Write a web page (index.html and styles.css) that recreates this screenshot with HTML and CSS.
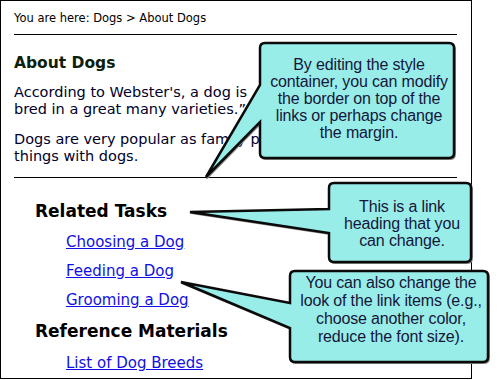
FILE: index.html
```html
<!DOCTYPE html>
<html lang="en">
<head>
<meta charset="utf-8">
<title>About Dogs</title>
<link rel="stylesheet" href="styles.css">
</head>
<body>
<div class="frame">
  <div class="crumbs">You are here: Dogs &gt; About Dogs</div>
  <hr class="rule rule-top">
  <h1 class="title">About Dogs</h1>
  <p class="para para-1">According to Webster's, a dog is<br>bred in a great many varieties.”</p>
  <p class="para para-2">Dogs are very popular as family pets.<br>things with dogs.</p>
  <hr class="rule rule-bottom">
  <h2 class="rel-head rel-head-first">Related Tasks</h2>
  <ul class="rel-list">
    <li><a href="#">Choosing a Dog</a></li>
    <li><a href="#">Feeding a Dog</a></li>
    <li><a href="#">Grooming a Dog</a></li>
  </ul>
  <h2 class="rel-head rel-head-second">Reference Materials</h2>
  <ul class="rel-list rel-list-last">
    <li><a href="#">List of Dog Breeds</a></li>
  </ul>

  <svg class="callouts" width="501" height="380" viewBox="0 0 501 380" aria-hidden="true">
    <g class="shadow" transform="translate(1 1)">
      <path d="M265 43 H449 Q454 43 454 48 V153 Q454 158 449 158 H265 Q260 158 260 153 V122 L206 177 L260 85 V48 Q260 43 265 43 Z"/>
      <path d="M334 183 H466 Q471 183 471 188 V257 Q471 262 466 262 H334 Q329 262 329 257 V233 L190 212 L329 209 V188 Q329 183 334 183 Z"/>
      <path d="M295 271 H483 Q488 271 488 276 V357 Q488 362 483 362 H295 Q290 362 290 357 V328 L181 282 L290 303 V276 Q290 271 295 271 Z"/>
    </g>
    <g class="bubble">
      <path d="M265 43 H449 Q454 43 454 48 V153 Q454 158 449 158 H265 Q260 158 260 153 V122 L206 177 L260 85 V48 Q260 43 265 43 Z"/>
      <path d="M334 183 H466 Q471 183 471 188 V257 Q471 262 466 262 H334 Q329 262 329 257 V233 L190 212 L329 209 V188 Q329 183 334 183 Z"/>
      <path d="M295 271 H483 Q488 271 488 276 V357 Q488 362 483 362 H295 Q290 362 290 357 V328 L181 282 L290 303 V276 Q290 271 295 271 Z"/>
    </g>
  </svg>

  <div class="note note-1">By editing the style<br>container, you can modify<br>the border on top of the<br>links or perhaps change<br>the margin.</div>
  <div class="note note-2">This is a link<br>heading that you<br>can change.</div>
  <div class="note note-3">You can also change the<br>look of the link items (e.g.,<br>choose another color,<br>reduce the font size).</div>
</div>
</body>
</html>
```

FILE: styles.css
```css
* { box-sizing: border-box; }

html, body {
  margin: 0;
  padding: 0;
  background: #ffffff;
}

.frame {
  position: relative;
  display: flex;
  flex-direction: column;
  align-items: flex-start;
  width: 472px;
  height: 379px;
  border: 1px solid #000;
  padding: 10px 14px 0 13px;
  font-family: "DejaVu Sans", Verdana, sans-serif;
  color: #00002a;
}

.crumbs {
  font-size: 11.5px;
  line-height: 14px;
  color: #000;
}

.rule {
  align-self: stretch;
  height: 0;
  border: 0;
  border-top: 1px solid #000;
  margin: 0;
}
.rule-top { margin-top: 9px; }
.rule-bottom { margin-top: 12px; }

.title {
  margin: 19px 0 0;
  font-size: 15.5px;
  line-height: 18px;
  font-weight: bold;
  color: #0c1e0c;
}

.para {
  margin: 0;
  font-size: 14.5px;
  line-height: 17px;
  white-space: nowrap;
}
.para-1 { margin-top: 12px; }
.para-2 { margin-top: 13px; }

.rel-head {
  margin: 0 0 0 21px;
  font-size: 17px;
  line-height: 20px;
  font-weight: bold;
  color: #000;
}
.rel-head-first { margin-top: 23px; }
.rel-head-second { margin-top: 12px; }

.rel-list {
  list-style: none;
  margin: 12px 0 0 52px;
  padding: 0;
  display: flex;
  flex-direction: column;
  gap: 11px;
}
.rel-list-last { margin-top: 13px; }

.rel-list li {
  font-size: 15px;
  line-height: 18px;
}
.rel-list a {
  color: #1010e6;
  text-decoration: underline;
}

.callouts {
  position: absolute;
  left: -1px;
  top: -1px;
  pointer-events: none;
  overflow: visible;
}
.callouts .shadow path {
  fill: none;
  stroke: #8a8a8a;
  stroke-width: 2;
  stroke-linejoin: round;
}
.callouts .bubble path {
  fill: #98ede9;
  stroke: #0a0a0a;
  stroke-width: 2.5;
  stroke-linejoin: miter;
}

.note {
  position: absolute;
  text-align: center;
  font-family: "Liberation Sans", Arial, sans-serif;
  font-size: 16px;
  line-height: 17px;
  letter-spacing: -0.15px;
  white-space: nowrap;
  color: #16163a;
}
.note-1 {
  left: 261px;
  top: 55px;
  width: 194px;
}
.note-2 {
  left: 330px;
  top: 197px;
  width: 142px;
}
.note-3 {
  left: 291px;
  top: 273px;
  width: 198px;
  line-height: 18px;
}
```
